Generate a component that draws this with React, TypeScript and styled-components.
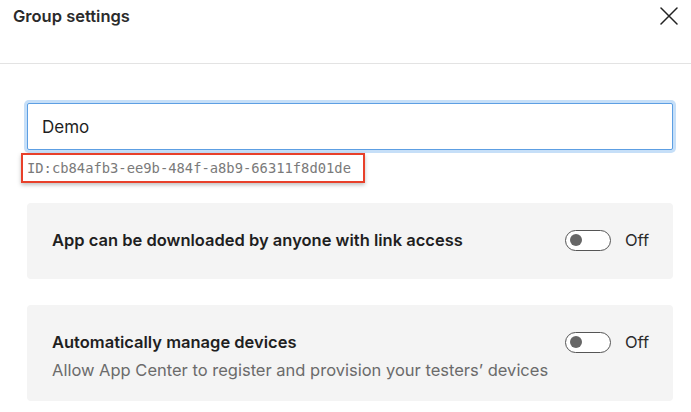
import React from 'react';
import styled, { createGlobalStyle } from 'styled-components';

const GlobalStyle = createGlobalStyle`
  html, body {
    margin: 0;
    padding: 0;
    background: #ffffff;
  }
  body {
    font-family: Inter, 'Noto Sans', 'Liberation Sans', sans-serif;
    color: #1f1f1f;
  }
  * {
    box-sizing: border-box;
  }
`;

const text = {
  heading: 'Group settings',
  groupName: 'Demo',
  groupId: 'ID:cb84afb3-ee9b-484f-a8b9-66311f8d01de',
};

type Setting = { title: string; description?: string; on: boolean };

const settings: Setting[] = [
  { title: 'App can be downloaded by anyone with link access', on: false },
  {
    title: 'Automatically manage devices',
    description: 'Allow App Center to register and provision your testers\u2019 devices',
    on: false,
  },
];

const CloseIcon = () => (
  <svg width="18" height="18" viewBox="0 0 18 18" fill="none">
    <path d="M1 1L17 17M17 1L1 17" stroke="#222" strokeWidth="1.5" strokeLinecap="round" />
  </svg>
);

const App: React.FC = () => {
  return (
    <>
      <GlobalStyle />
      <Panel>
        <Header>
          <Heading>{text.heading}</Heading>
          <CloseButton aria-label="Close">
            <CloseIcon />
          </CloseButton>
        </Header>
        <Body>
          <NameInput defaultValue={text.groupName} />
          <IdRow>
            <IdBadge>{text.groupId}</IdBadge>
          </IdRow>
          <CardList>
            {settings.map(setting => (
              <Card key={setting.title}>
                <CardRow>
                  <CardTitle>{setting.title}</CardTitle>
                  <ToggleWrap>
                    <Toggle $on={setting.on}>
                      <Knob $on={setting.on} />
                    </Toggle>
                    <ToggleLabel>{setting.on ? 'On' : 'Off'}</ToggleLabel>
                  </ToggleWrap>
                </CardRow>
                {setting.description && (
                  <CardDescription>{setting.description}</CardDescription>
                )}
              </Card>
            ))}
          </CardList>
        </Body>
      </Panel>
    </>
  );
};

const Panel = styled.div`
  width: 691px;
  height: 412px;
  background: #fff;
  overflow: hidden;
`;

const Header = styled.div`
  height: 64px;
  display: flex;
  justify-content: space-between;
  align-items: flex-start;
  padding: 6px 13px 0 13px;
  border-bottom: 1px solid #e3e3e3;
`;

const Heading = styled.h1`
  margin: 0;
  font-size: 16.5px;
  line-height: 20px;
  font-weight: 600;
  color: #2b2b2b;
`;

const CloseButton = styled.button`
  border: 0;
  background: none;
  padding: 0;
  margin: 1px 0 0 0;
  width: 18px;
  height: 18px;
  display: flex;
  cursor: pointer;
`;

const Body = styled.div`
  padding: 39px 18px 0 27px;
  display: flex;
  flex-direction: column;
`;

const NameInput = styled.input`
  height: 47px;
  width: 100%;
  border: 1.5px solid #5d9fe3;
  border-radius: 2px;
  box-shadow: 0 0 0 3px #c6dff8;
  padding: 0 14px;
  font-family: inherit;
  font-size: 17px;
  color: #1f1f1f;
  outline: none;
`;

const IdRow = styled.div`
  display: flex;
  margin: 3px 0 0 -6px;
`;

const IdBadge = styled.div`
  border: 2.5px solid #e8402a;
  padding: 4px 12px 4px 4px;
  font-family: 'DejaVu Sans Mono', 'Liberation Mono', monospace;
  font-size: 13.8px;
  line-height: 18px;
  color: #7a7a7a;
  box-shadow: 0 2px 4px rgba(0, 0, 0, 0.25);
`;

const CardList = styled.div`
  display: flex;
  flex-direction: column;
  gap: 26px;
  margin-top: 20px;
`;

const Card = styled.div`
  background: #f4f4f4;
  border-radius: 4px;
  min-height: 76px;
  padding: 27px 24px 21px 25px;
  display: flex;
  flex-direction: column;
  gap: 8px;
`;

const CardRow = styled.div`
  display: flex;
  justify-content: space-between;
  align-items: center;
  height: 20px;
`;

const CardTitle = styled.span`
  font-size: 16.5px;
  font-weight: 600;
  color: #1f1f1f;
`;

const CardDescription = styled.span`
  font-size: 16.5px;
  line-height: 20px;
  color: #6b6b6b;
`;

const ToggleWrap = styled.div`
  display: flex;
  align-items: center;
  gap: 14px;
`;

const Toggle = styled.div<{ $on: boolean }>`
  width: 46px;
  height: 21px;
  border-radius: 11px;
  border: 1px solid #555;
  background: ${({ $on }) => ($on ? '#0078d4' : '#fff')};
  display: flex;
  align-items: center;
  padding: 0 4px;
  justify-content: ${({ $on }) => ($on ? 'flex-end' : 'flex-start')};
`;

const Knob = styled.span<{ $on: boolean }>`
  width: 12px;
  height: 12px;
  border-radius: 50%;
  background: ${({ $on }) => ($on ? '#fff' : '#666')};
`;

const ToggleLabel = styled.span`
  font-size: 16.5px;
  color: #2b2b2b;
  width: 24px;
`;

export default App;
